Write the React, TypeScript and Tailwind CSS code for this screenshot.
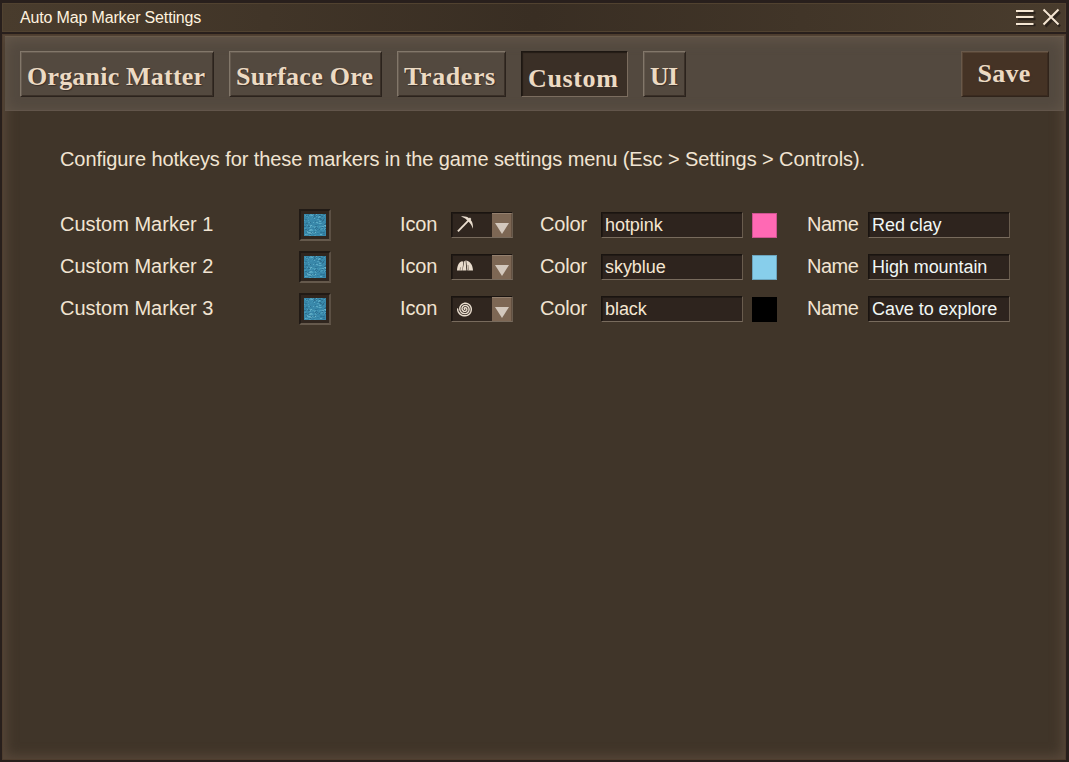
import React from "react";
import clsx from "clsx";

const tabs = [
  { label: "Organic Matter", width: "w-[194px]", spacing: "tracking-[0.2px]" },
  { label: "Surface Ore", width: "w-[153px]", spacing: "tracking-[0.25px]" },
  { label: "Traders", width: "w-[109px]", spacing: "tracking-[0.6px]" },
  { label: "Custom", width: "w-[107px]", spacing: "tracking-[0.65px]", active: true },
  { label: "UI", width: "w-[43px]", spacing: "tracking-[-0.9px]" },
];

const markers = [
  { icon: "pick", color: "hotpink", swatch: "bg-[#ff69b4]", name: "Red clay" },
  { icon: "rocks", color: "skyblue", swatch: "bg-[#87ceeb]", name: "High mountain" },
  { icon: "spiral", color: "black", swatch: "bg-black", name: "Cave to explore" },
];

const serif = "font-['Liberation_Serif',serif] text-[26px] font-bold text-[#ecdac3] [text-shadow:1px_1px_1px_#3a3028]";
const inset =
  "border border-t-[#1a1410] border-l-[#1a1410] border-r-[#695c4e] border-b-[#786b5d] shadow-[inset_1px_1px_0_#211a15]";

const waterShades = ["#27617f", "#6fbcd2", "#2f7ca0", "#57a9c4", "#2a6c8e", "#4c9fbc", "#3f90b2"];
const hash = (n: number) => {
  const v = Math.sin(n * 127.1 + 11.7) * 43758.5453;
  return v - Math.floor(v);
};
const waterSpots = Array.from({ length: 230 }, (_, i) => ({
  x: Math.floor(hash(i) * 22),
  y: Math.floor(hash(i + 500) * 22),
  w: hash(i + 900) > 0.6 ? 2 : 1,
  fill: waterShades[Math.floor(hash(i + 1300) * 7)],
}));

const spiralPoints = Array.from({ length: 100 }, (_, i) => {
  const t = i / 99;
  const angle = t * Math.PI * 2 * 3.15 + 2.2;
  const r = 0.4 + t * 7;
  return `${(8 + Math.cos(angle) * r).toFixed(2)},${(8 + Math.sin(angle) * r).toFixed(2)}`;
}).join(" ");

function Toggle() {
  return (
    <div className="flex h-8 w-8 items-center justify-center border-2 border-t-[#211a15] border-l-[#211a15] border-r-[#5c5044] border-b-[#65594c] bg-[#30261f]">
      <svg width="22" height="22" viewBox="0 0 22 22" className="bg-[#3988aa]">
        {waterSpots.map((s, i) => (
          <rect key={i} x={s.x} y={s.y} width={s.w} height="1" fill={s.fill} opacity="0.65" />
        ))}
      </svg>
    </div>
  );
}

function MarkerIcon({ kind }: { kind: string }) {
  return (
    <svg width="16" height="17" viewBox="0 0 16 17" fill="none" className="text-[#e9ddce]">
      {kind === "pick" && (
        <>
          <path d="M.9 15.4 11.6 4.4" stroke="currentColor" strokeWidth="1.9" />
          <path d="M4 .5C7.2-.1 10 .7 12 2.2l1-.6 1.3 1.3-.6 1.1c1.8 2 2.6 5 2.1 8.7-.8-3-2-5-3.9-6.8L9.8 3.9C8.2 2.4 6.5 1.3 4 .5Z" fill="currentColor" />
        </>
      )}
      {kind === "rocks" && (
        <>
          <path d="M0 12.6C.1 8.4 1.4 4.5 5 3.3l1.4.4-1.1 8.9Z" fill="currentColor" />
          <path d="M5.5 12.6 7.2 3.4 8.6 2.2l.8 10.4Z" fill="currentColor" />
          <path d="M9.2 2.4c4.4.7 6.5 5 6.8 10.2h-5.6Z" fill="currentColor" />
          <path d="M3.6 9.3 3 12.6M11 7l.6 5.6" stroke="#6b5e50" strokeWidth=".6" />
        </>
      )}
      {kind === "spiral" && <polyline points={spiralPoints} stroke="currentColor" strokeWidth="1.45" strokeLinecap="round" transform="translate(0 1)" />}
    </svg>
  );
}

function Field({ text, cool }: { text: string; cool?: boolean }) {
  return (
    <div className={clsx("h-[26px] w-[142px] bg-[#2e241e] pl-[3px] text-[18px] leading-[25px] tracking-[-0.06px]", inset, cool ? "text-[#f1f7f5]" : "text-[#f4e6d2]")}>
      {text}
    </div>
  );
}

export default function App() {
  return (
    <div className="flex h-[762px] w-[1069px] flex-col gap-[2px] bg-[#281f1c] pt-[3px] pr-[3px] pb-[2px] pl-[2px] font-['Liberation_Sans',Arial,sans-serif] text-[#f1e4d2]">
      <header className="flex h-[29px] shrink-0 items-center justify-between border border-[#514230] bg-linear-to-r from-[#493c2d] via-[#392e23] to-[#493c2d] pr-[4px] pl-[17px]">
        <h1 className="text-[16px] leading-[27px] tracking-[-0.16px] whitespace-nowrap text-[#fff2df]">Auto Map Marker Settings</h1>
        <svg width="46" height="22" viewBox="0 0 46 22" fill="none">
          <path d="M3 6h17.5M3 12h17.5M3 18h17.5M30.5 5 45 19.5M45 5 30.5 19.5" stroke="#201814" strokeWidth="2.5" opacity=".7" />
          <path d="M1 4h17.5M1 10h17.5M1 17h17.5M28.5 2.5 43.5 17.5M43.5 2.5 28.5 17.5" stroke="#f4e5d2" strokeWidth="2" />
        </svg>
      </header>

      <main className="flex min-h-0 flex-1 flex-col border border-[#4e3d2e] bg-[#403529] pt-px pr-px pb-px pl-[2px] shadow-[inset_0_0_12px_3px_#58483a]">
        <nav className="flex h-[75px] shrink-0 items-start justify-between border-b border-[#62554a] bg-[#53493f] pt-[15px] pr-[15px] pl-[15px] shadow-[inset_0_1px_0_#6a5b4a,inset_0_3px_14px_#65584b,inset_-1px_0_0_#6a5b4a]">
          <div className="flex gap-[15px]">
            {tabs.map((tab) => (
              <button
                key={tab.label}
                className={clsx(
                  "flex h-[46px] justify-start border pl-[6px] text-left leading-[30px] whitespace-nowrap",
                  serif,
                  tab.width,
                  tab.spacing,
                  tab.active
                    ? "border-t-[#1d1712] border-l-[#1d1712] border-r-[#7b6d5f] border-b-[#7b6d5f] bg-[#3a2f26] pt-[12px] shadow-[inset_1px_1px_1px_#241c16]"
                    : "border-t-[#82776a] border-l-[#82776a] border-r-[#2b231d] border-b-[#2b231d] bg-[#53493f] pt-[10px] shadow-[inset_1px_1px_0_#655a4f,inset_-1px_-1px_0_#3a3028]",
                )}
              >
                {tab.label}
              </button>
            ))}
          </div>
          <button
            className={clsx(
              "flex h-[46px] w-[88px] justify-center border border-t-[#69594a] border-r-[#30241b] border-b-[#30241b] border-l-[#69594a] bg-[#453325] pt-[7px] pr-[2px] leading-[30px] tracking-[0.2px] shadow-[inset_1px_1px_0_#574434,inset_-1px_-1px_0_#3a2a1f]",
              serif,
            )}
          >
            Save
          </button>
        </nav>

        <section className="pt-[33px] pl-[55px] text-[20px]">
          <p className="h-[30px] leading-[30px] tracking-[-0.085px] whitespace-nowrap">
            Configure hotkeys for these markers in the game settings menu (Esc &gt; Settings &gt; Controls).
          </p>
          <div className="mt-[35px] flex flex-col gap-[10px]">
            {markers.map((m, i) => (
              <div key={m.color} className="flex h-8 items-center whitespace-nowrap">
                <span className="w-[239px] pb-[2px] leading-[30px]">Custom Marker {i + 1}</span>
                <Toggle />
                <span className="ml-[69px] w-[51px] pb-[2px] leading-[30px] tracking-[-0.15px]">Icon</span>
                <div className={clsx("flex h-[26px] w-[62px] justify-between bg-[#30261f]", inset)}>
                  <div className="mt-[3px] ml-[5px]">
                    <MarkerIcon kind={m.icon} />
                  </div>
                  <div className="flex w-5 items-center justify-center border-t border-r border-t-[#94806e] border-r-[#645141] bg-[#7d6754] pt-[5px]">
                    <svg width="14" height="11" viewBox="0 0 14 11">
                      <path d="M0 0h14L7 11Z" fill="#d3c8bd" />
                    </svg>
                  </div>
                </div>
                <span className="ml-[27px] w-[61px] pb-[2px] leading-[30px] tracking-[-0.15px]">Color</span>
                <Field text={m.color} />
                <div className={clsx("ml-[9px] h-[25px] w-[25px] border border-black/20", m.swatch)} />
                <span className="ml-[30px] w-[61px] pb-[2px] leading-[30px] tracking-[-0.5px]">Name</span>
                <Field text={m.name} cool />
              </div>
            ))}
          </div>
        </section>
      </main>
    </div>
  );
}
